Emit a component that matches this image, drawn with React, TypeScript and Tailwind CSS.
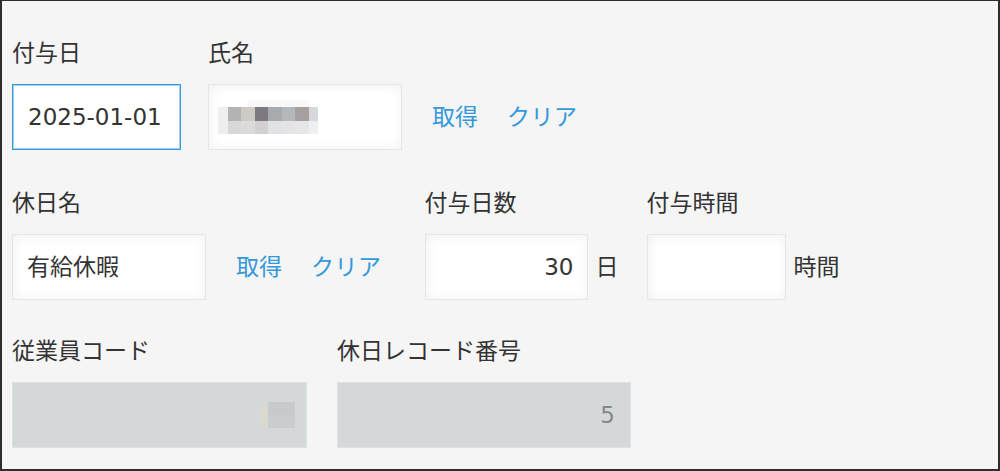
import React from 'react';

// Form for granting paid leave (kintone-style record edit view)

const FONT = { fontFamily: '"DejaVu Sans", "Noto Sans CJK JP", sans-serif' };

function Label({ children }: { children: React.ReactNode }) {
  return <div className="h-[30px] leading-[30px] text-[23px] text-[#333] whitespace-nowrap">{children}</div>;
}

function Links() {
  return (
    <div className="flex h-[66px] items-center gap-[29px] text-[23px] text-[#3498db] whitespace-nowrap">
      <span className="cursor-pointer">取得</span>
      <span className="cursor-pointer tracking-[0.5px]">クリア</span>
    </div>
  );
}

// pixelated placeholder for the masked name
function NameMosaic() {
  const cols = [0, 10, 23, 37, 50, 64, 77, 91, 100];
  const top = ['#f0eeee', '#b3b3b5', '#cdcac5', '#7e7980', '#a7abae', '#b5b8bb', '#a6a19f', '#d5d9de'];
  const bottom = ['#eeeeee', '#d8d8d8', '#dbdbdb', '#d3d1d0', '#e0e2e5', '#e5e3e5', '#e5e6e9', '#eeeff1'];
  return (
    <svg width="100" height="34" viewBox="0 0 100 34" className="block">
      <rect x="30" y="0" width="60" height="7" fill="#f8f8f8" />
      {top.map((c, i) => (
        <rect key={`t${i}`} x={cols[i]} y="7" width={cols[i + 1] - cols[i]} height="14" fill={c} />
      ))}
      {bottom.map((c, i) => (
        <rect key={`b${i}`} x={cols[i]} y="21" width={cols[i + 1] - cols[i]} height="13" fill={c} />
      ))}
    </svg>
  );
}

function CodeMosaic() {
  return (
    <svg width="35" height="26" viewBox="0 0 35 26" className="block">
      <rect x="0" y="0" width="8" height="26" fill="#d9d8d1" />
      <rect x="8" y="0" width="27" height="13" fill="#c7cacc" />
      <rect x="8" y="13" width="27" height="13" fill="#cacdce" />
    </svg>
  );
}

const inputBox =
  'h-[66px] box-border border border-[#e3e7e8] bg-white shadow-[inset_1px_1px_12px_#f0f0f0] text-[23px] text-[#333] flex items-center';

export default function App() {
  return (
    <div
      style={FONT}
      className="w-[1000px] h-[471px] box-border overflow-hidden bg-[#f5f5f5] border-t border-l-2 border-r-2 border-b-2 border-[#2e2e2e] pl-[10px] pt-[37px]"
    >
      {/* row 1 */}
      <div className="flex items-start">
        <div className="flex flex-col gap-[16px]">
          <Label>付与日</Label>
          <div className="h-[66px] w-[169px] box-border border border-[#3498db] shadow-[inset_0_0_0_1px_rgba(52,152,219,0.45)] bg-white flex items-center pl-[15px] text-[23px] text-[#333]">
            2025-01-01
          </div>
        </div>
        <div className="flex flex-col gap-[16px] ml-[27px]">
          <Label>氏名</Label>
          <div className={`${inputBox} w-[194px] pl-[9px]`}>
            <NameMosaic />
          </div>
        </div>
        <div className="mt-[46px] ml-[30px]">
          <Links />
        </div>
      </div>

      {/* row 2 */}
      <div className="flex items-start mt-[38px]">
        <div className="flex flex-col gap-[16px]">
          <Label>休日名</Label>
          <div className={`${inputBox} w-[194px] pl-[14px]`}>有給休暇</div>
        </div>
        <div className="mt-[46px] ml-[30px]">
          <Links />
        </div>
        <div className="flex flex-col gap-[16px] ml-[43px]">
          <Label>付与日数</Label>
          <div className="flex items-center">
            <div className={`${inputBox} w-[163px] justify-end pr-[13px]`}>30</div>
            <span className="ml-[8px] text-[23px] text-[#333]">日</span>
          </div>
        </div>
        <div className="flex flex-col gap-[16px] ml-[28px]">
          <Label>付与時間</Label>
          <div className="flex items-center">
            <div className={`${inputBox} w-[139px]`} />
            <span className="ml-[8px] text-[23px] text-[#333]">時間</span>
          </div>
        </div>
      </div>

      {/* row 3 */}
      <div className="flex items-start mt-[36px]">
        <div className="flex flex-col gap-[16px]">
          <Label>従業員コード</Label>
          <div className="h-[66px] w-[295px] box-border border border-[#dfe2e3] bg-[#d4d8d9] flex items-center justify-end pr-[11px]">
            <CodeMosaic />
          </div>
        </div>
        <div className="flex flex-col gap-[16px] ml-[30px]">
          <Label>休日レコード番号</Label>
          <div className="h-[66px] w-[294px] box-border border border-[#dfe2e3] bg-[#d4d8d9] flex items-center justify-end pr-[15px] text-[23px] text-[#888]">
            5
          </div>
        </div>
      </div>
    </div>
  );
}
